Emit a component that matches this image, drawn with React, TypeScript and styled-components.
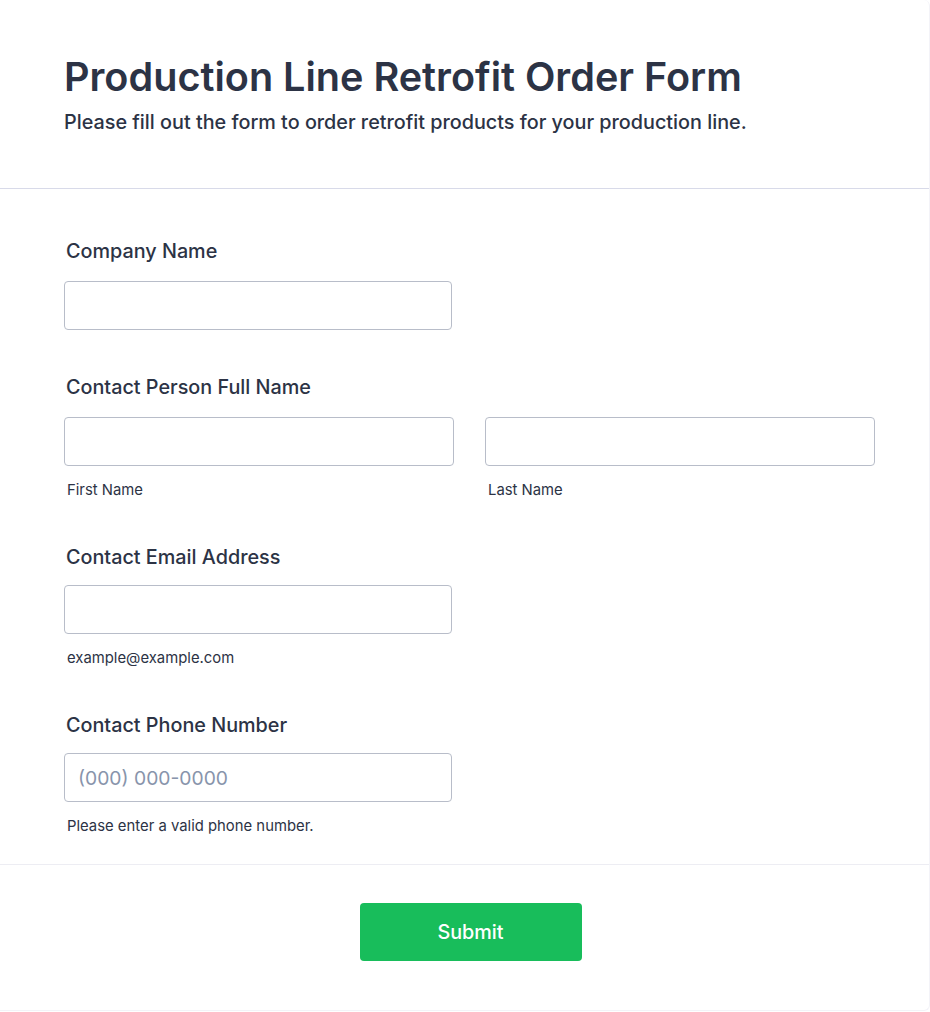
import React from "react";
import styled, { createGlobalStyle } from "styled-components";

const Global = createGlobalStyle`
  html, body { margin: 0; padding: 0; background: #ffffff; }
  body { font-family: Inter, "Noto Sans", sans-serif; color: #2c3345; }
  * { box-sizing: border-box; }
`;

const Card = styled.div`
  width: 930px;
  background: #ffffff;
  border-right: 1px solid #f3f3f8;
  border-bottom: 1px solid #f3f3f8;
  border-bottom-right-radius: 6px;
  border-top-right-radius: 6px;
  display: flex;
  flex-direction: column;
`;

const Header = styled.header`
  padding: 53px 52px 54px 64px;
  border-bottom: 1px solid #d8dae9;
  display: flex;
  flex-direction: column;
  gap: 9px;
`;

const Title = styled.h1`
  margin: 0;
  font-size: 39.6px;
  line-height: 48px;
  font-weight: 600;
  color: #2c3345;
`;

const Subtitle = styled.p`
  margin: 0;
  font-size: 19.8px;
  line-height: 24px;
  font-weight: 500;
  color: #2c3345;
`;

const Body = styled.div`
  padding: 50px 52px 28px 64px;
  display: flex;
  flex-direction: column;
  gap: 45px;
  border-bottom: 1px solid #ededf3;
`;

const Field = styled.div<{ $labelGap: number }>`
  display: flex;
  flex-direction: column;
  & > label {
    margin-bottom: ${(p) => p.$labelGap}px;
  }
`;

const Label = styled.label`
  display: block;
  margin: 0 0 0 2px;
  font-size: 19.8px;
  line-height: 24px;
  font-weight: 500;
  color: #2c3345;
`;

const Row = styled.div`
  display: grid;
  grid-template-columns: 390px 390px;
  column-gap: 31px;
`;

const Col = styled.div`
  display: flex;
  flex-direction: column;
`;

const Input = styled.input<{ $w?: number }>`
  width: ${(p) => (p.$w ? `${p.$w}px` : "100%")};
  height: 49px;
  border: 1px solid #b8bdc9;
  border-radius: 4px;
  padding: 0 13px;
  font-family: Inter, "Noto Sans", sans-serif;
  font-size: 19.3px;
  color: #2c3345;
  background: #ffffff;
  outline: none;
  &::placeholder { color: #8894ab; opacity: 1; }
`;

const Sub = styled.span`
  display: block;
  margin: 14px 0 0 3px;
  font-size: 14.85px;
  line-height: 20px;
  font-weight: 400;
  color: #2c3345;
`;

const Footer = styled.div`
  padding: 38px 52px 49px 64px;
  display: flex;
  justify-content: center;
`;

const SubmitButton = styled.button`
  width: 222px;
  height: 58px;
  border: none;
  border-radius: 4px;
  background: #18bd5b;
  color: #ffffff;
  font-family: Inter, "Noto Sans", sans-serif;
  font-size: 19.8px;
  font-weight: 500;
  cursor: pointer;
`;

export default function App() {
  return (
    <>
      <Global />
      <Card>
        <Header>
          <Title>Production Line Retrofit Order Form</Title>
          <Subtitle>Please fill out the form to order retrofit products for your production line.</Subtitle>
        </Header>
        <Body>
          <Field $labelGap={18}>
            <Label>Company Name</Label>
            <Input $w={388} />
          </Field>
          <Field $labelGap={18}>
            <Label>Contact Person Full Name</Label>
            <Row>
              <Col>
                <Input />
                <Sub>First Name</Sub>
              </Col>
              <Col>
                <Input />
                <Sub>Last Name</Sub>
              </Col>
            </Row>
          </Field>
          <Field $labelGap={16}>
            <Label>Contact Email Address</Label>
            <Input $w={388} />
            <Sub>example@example.com</Sub>
          </Field>
          <Field $labelGap={16}>
            <Label>Contact Phone Number</Label>
            <Input $w={388} placeholder="(000) 000-0000" />
            <Sub>Please enter a valid phone number.</Sub>
          </Field>
        </Body>
        <Footer>
          <SubmitButton>Submit</SubmitButton>
        </Footer>
      </Card>
    </>
  );
}
